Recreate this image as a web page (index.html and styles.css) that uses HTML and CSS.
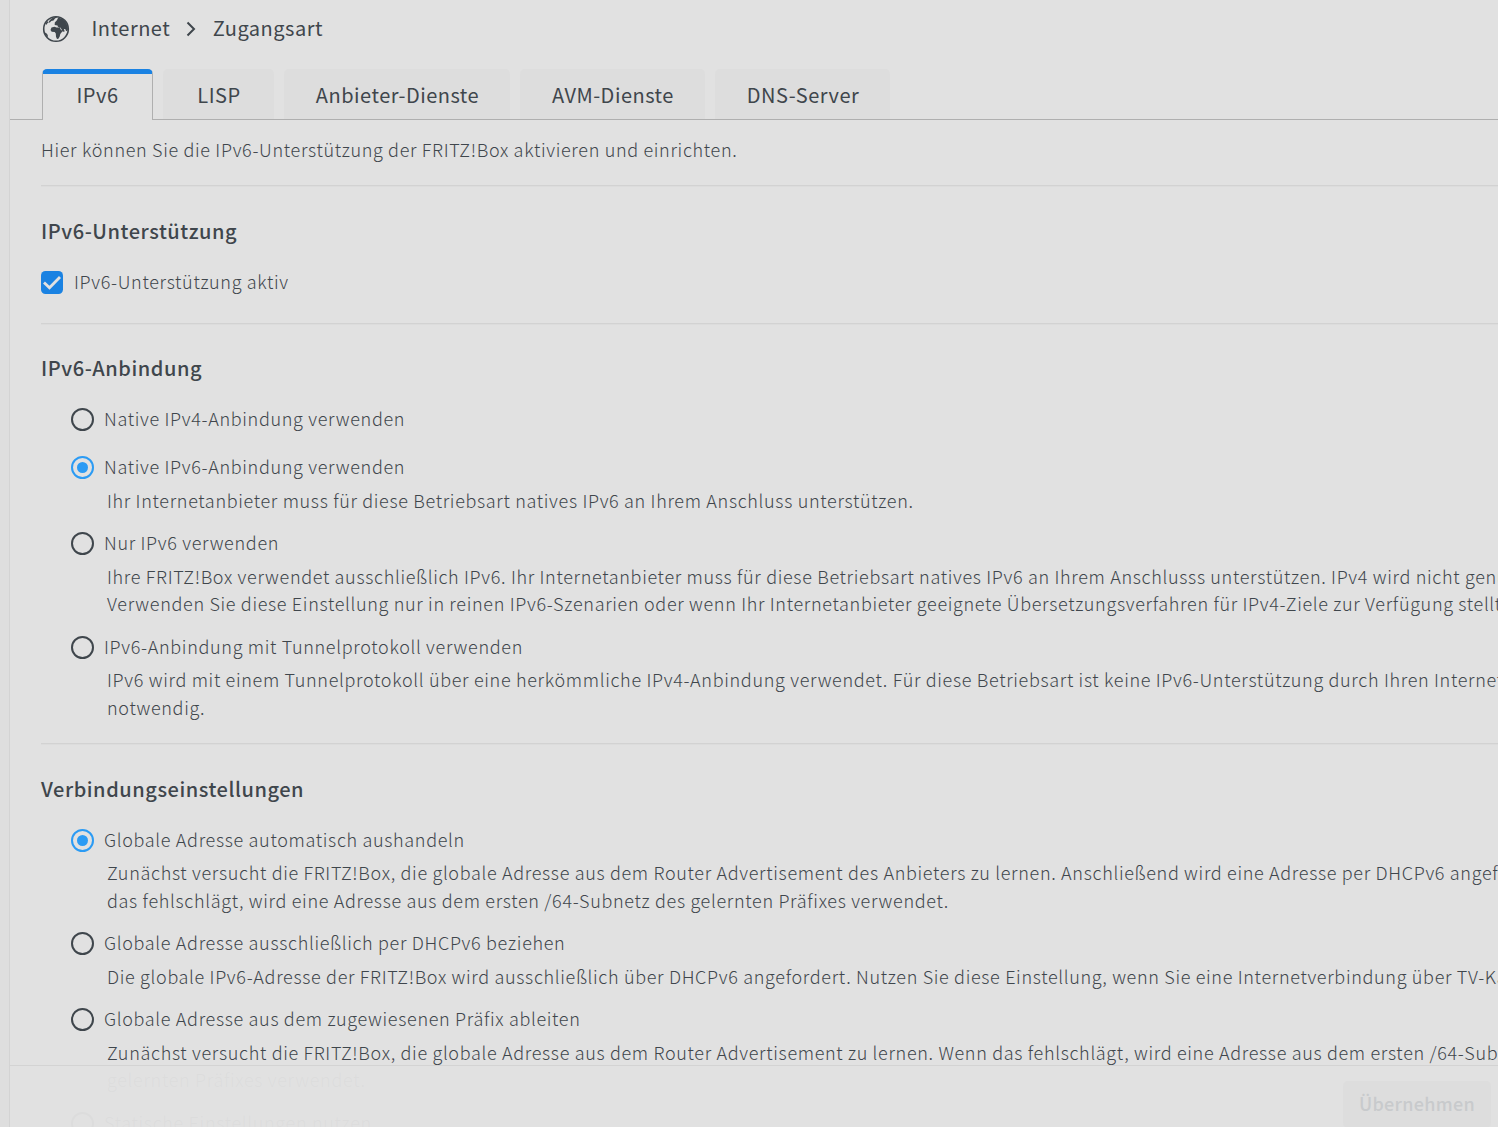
FILE: index.html
```html
<!DOCTYPE html>
<html lang="de">
<head>
    <meta charset="UTF-8">
    <meta name="viewport" content="width=device-width, initial-scale=1.0">
    <title>FRITZ!Box - Zugangsart</title>
    <link rel="stylesheet" href="styles.css">
</head>
<body>

    <main class="page">
        <header class="breadcrumb">
            <svg class="globe" viewBox="0 0 28 28">
                <circle cx="14" cy="14" r="12.3" fill="none" stroke="#3f464c" stroke-width="1.6"/>
                <path fill="#3f464c" d="M9.5 12.6l3-.9 2 .8 3.3.1 1.2 2.5 1.9.6-2.6 3.2-.6 2.6-1.3 2.2-1.4.3-1-2.3-.2-3.3-1.1-1.4-3-.3-1.2-1.8zM12.8 7.5l2.1-2.2 1.2-2.6 4 .7 3.5 3.4 2.3 4.6v3.8l-1.7 1.1-1-2.2-1.3-.1.8 2.4-1.7.3-2.4-3.9-2.7-1-.4-1.3-2.8-.4zM9.4 3.4l4.1-1.6 1.8.4-2.3 1.3-1.5 2-2.2.4-1.4 1.7-1.7.2 1-1.9zM3.7 8.1l2-2 .4 1.4-2 2.4zM2.1 17.5l2 .4 1.7 2-.1 2.7z"/>
            </svg>
            <span class="crumb">Internet</span>
            <svg class="arrow" viewBox="0 0 10 16">
                <path d="M1.5 1.5L8 8l-6.500 6.500" fill="none" stroke="#3f464c" stroke-width="2"/>
            </svg>
            <span class="crumb">Zugangsart</span>
        </header>

        <nav class="tabs">
            <a class="tab active">IPv6</a>
            <a class="tab">LISP</a>
            <a class="tab wide">Anbieter-Dienste</a>
            <a class="tab dienste">AVM-Dienste</a>
            <a class="tab dns">DNS-Server</a>
        </nav>

        <div class="content">
            <p class="intro">Hier können Sie die IPv6-Unterstützung der FRITZ!Box aktivieren und einrichten.</p>

            <section class="section">
                <h2>IPv6-Unterstützung</h2>
                <div class="option">
                    <label class="row">
                        <svg class="checkbox" viewBox="0 0 22 23">
                            <rect width="22" height="23" rx="4.500" fill="#1a82e2"/>
                            <path d="M3 11.500l5.500 5.300L19 6" fill="none" stroke="#e1e1e1" stroke-width="2.800"/>
                        </svg>
                        <span>IPv6-Unterstützung aktiv</span>
                    </label>
                </div>
            </section>

            <section class="section">
                <h2>IPv6-Anbindung</h2>
                <div class="options">
                    <div class="option">
                        <label class="row"><i class="radio"></i>Native IPv4-Anbindung verwenden</label>
                    </div>
                    <div class="option">
                        <label class="row"><i class="radio checked"></i>Native IPv6-Anbindung verwenden</label>
                        <p class="hint">Ihr Internetanbieter muss für diese Betriebsart natives IPv6 an Ihrem Anschluss unterstützen.</p>
                    </div>
                    <div class="option">
                        <label class="row"><i class="radio"></i>Nur IPv6 verwenden</label>
                        <p class="hint">Ihre FRITZ!Box verwendet ausschließlich IPv6. Ihr Internetanbieter muss für diese Betriebsart natives IPv6 an Ihrem Anschlusss unterstützen. IPv4 wird nicht genutzt.<br>Verwenden Sie diese Einstellung nur in reinen IPv6-Szenarien oder wenn Ihr Internetanbieter geeignete Übersetzungsverfahren für IPv4-Ziele zur Verfügung stellt.</p>
                    </div>
                    <div class="option">
                        <label class="row"><i class="radio"></i>IPv6-Anbindung mit Tunnelprotokoll verwenden</label>
                        <p class="hint">IPv6 wird mit einem Tunnelprotokoll über eine herkömmliche IPv4-Anbindung verwendet. Für diese Betriebsart ist keine IPv6-Unterstützung durch Ihren Internetanbieter<br>notwendig.</p>
                    </div>
                </div>
            </section>

            <section class="section">
                <h2>Verbindungseinstellungen</h2>
                <div class="options">
                    <div class="option">
                        <label class="row"><i class="radio checked"></i>Globale Adresse automatisch aushandeln</label>
                        <p class="hint">Zunächst versucht die FRITZ!Box, die globale Adresse aus dem Router Advertisement des Anbieters zu lernen. Anschließend wird eine Adresse per DHCPv6 angefordert. Wenn<br>das fehlschlägt, wird eine Adresse aus dem ersten /64-Subnetz des gelernten Präfixes verwendet.</p>
                    </div>
                    <div class="option">
                        <label class="row"><i class="radio"></i>Globale Adresse ausschließlich per DHCPv6 beziehen</label>
                        <p class="hint">Die globale IPv6-Adresse der FRITZ!Box wird ausschließlich über DHCPv6 angefordert. Nutzen Sie diese Einstellung, wenn Sie eine Internetverbindung über TV-Kabel nutzen.</p>
                    </div>
                    <div class="option">
                        <label class="row"><i class="radio"></i>Globale Adresse aus dem zugewiesenen Präfix ableiten</label>
                        <p class="hint">Zunächst versucht die FRITZ!Box, die globale Adresse aus dem Router Advertisement zu lernen. Wenn das fehlschlägt, wird eine Adresse aus dem ersten /64-Subnetz des<br>gelernten Präfixes verwendet.</p>
                    </div>
                    <div class="option">
                        <label class="row"><i class="radio"></i>Statische Einstellungen nutzen</label>
                    </div>
                </div>
            </section>
        </div>

        <footer class="footer">
            <button class="apply" disabled>Übernehmen</button>
        </footer>
    </main>

</body>
</html>
```
FILE: styles.css
```css
* {
    box-sizing: border-box;
}
body {
    margin: 0;
    height: 100vh;
    overflow: hidden;
    padding-left: 9px;
    background-color: #dedede;
    color: #3f464c;
    font-family: "Noto Sans CJK SC", "Noto Sans", sans-serif;
    font-size: 18px;
    font-weight: 300;
    letter-spacing: 0.675px;
}
.page {
    position: relative;
    height: 100vh;
    overflow: hidden;
    background-color: #e1e1e1;
    border-left: 1px solid #d3d3d3;
    white-space: nowrap;
}
.breadcrumb {
    display: flex;
    align-items: center;
    height: 58px;
    padding-left: 32px;
    font-size: 20px;
    font-weight: 400;
    letter-spacing: 0.5px;
}
.crumb {
    padding-bottom: 4px;
}
.globe {
    width: 28px;
    height: 28px;
    margin-right: 21.5px;
}
.arrow {
    width: 10px;
    height: 16px;
    margin: 0 16.5px 0 16px;
}
.tabs {
    display: flex;
    gap: 10px;
    height: 62px;
    padding: 11px 0 0 32px;
    background: linear-gradient(#afafaf, #afafaf) bottom / 100% 1px no-repeat;
    font-size: 20px;
    font-weight: 400;
    letter-spacing: 0.5px;
}
.tab {
    width: 111px;
    height: 50px;
    padding-left: 1px;
    line-height: 52px;
    text-align: center;
    border-radius: 5px 5px 0 0;
    background-color: #dddddd;
}
.tab.active {
    height: 51px;
    padding-left: 0;
    line-height: 42px;
    background-color: #e1e1e1;
    border: 1px solid #afafaf;
    border-top: 5px solid #1a82e2;
    border-bottom: none;
}
.tab.wide {
    width: 226px;
}
.tab.dienste {
    width: 185px;
}
.tab.dns {
    width: 175px;
}
.content {
    padding-left: 31px;
}
.intro {
    margin: 0;
    height: 65.3px;
    line-height: 59px;
}
.section {
    padding: 31.4px 0 4.1px;
    border-top: 1px solid #d2d2d2;
    box-shadow: inset 0 1px #dcdcdc;
}
h2 {
    margin: 0 0 27px;
    font-size: 20px;
    line-height: 26px;
    font-weight: 500;
    letter-spacing: 0.55px;
}
.options {
    padding-left: 30px;
}
.option {
    padding-bottom: 16px;
}
.row {
    display: flex;
    align-items: flex-start;
    height: 24px;
    margin-bottom: 8px;
    line-height: 20px;
}
.checkbox {
    width: 22px;
    height: 23px;
    margin-right: 11px;
}
.radio {
    display: flex;
    align-items: center;
    justify-content: center;
    width: 23px;
    height: 23px;
    margin-right: 10px;
    border: 2px solid #3f464c;
    border-radius: 50%;
}
.radio.checked {
    border-color: #2b9bf4;
}
.radio.checked::after {
    content: "";
    width: 11px;
    height: 11px;
    border-radius: 50%;
    background-color: #2b9bf4;
}
.hint {
    margin: -1.3px 0 1.8px;
    padding-left: 36px;
    line-height: 27.5px;
}
.footer {
    position: absolute;
    left: 0;
    right: 0;
    bottom: 0;
    display: flex;
    justify-content: flex-end;
    height: 62px;
    padding: 15px 7px 0 0;
    border-top: 1px solid #d3d3d3;
    background-color: rgba(225, 225, 225, 0.97);
}
.apply {
    width: 148px;
    height: 47px;
    padding: 0 0 4px;
    border: none;
    border-radius: 5px;
    background-color: #dddddd;
    color: #c8cacc;
    font-family: inherit;
    font-size: 18px;
    font-weight: 500;
    letter-spacing: 0.3px;
}
```
